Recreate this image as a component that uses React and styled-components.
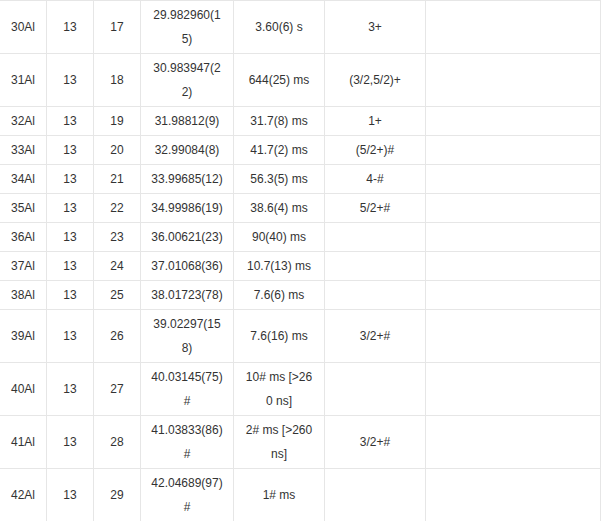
import React from "react";
import styled, { createGlobalStyle } from "styled-components";

const Global = createGlobalStyle`
  html, body { margin: 0; padding: 0; background: #fff; }
  body { font-family: "Liberation Sans", Arial, sans-serif; }
`;

const Table = styled.table`
  border-collapse: collapse;
  table-layout: fixed;
  width: 602px;
  margin-left: -1px;
  font-size: 12px;
  line-height: 24px;
  color: #333;
`;

const Cell = styled.td`
  border: 1px solid #e6e6e6;
  padding: 2px 10px;
  text-align: center;
  vertical-align: middle;
  word-break: break-all;
`;

const widths = [47, 47, 47, 93, 91, 101, 175];

const rows = [
  ["30Al", "13", "17", "29.982960(15)", "3.60(6) s", "3+"],
  ["31Al", "13", "18", "30.983947(22)", "644(25) ms", "(3/2,5/2)+"],
  ["32Al", "13", "19", "31.98812(9)", "31.7(8) ms", "1+"],
  ["33Al", "13", "20", "32.99084(8)", "41.7(2) ms", "(5/2+)#"],
  ["34Al", "13", "21", "33.99685(12)", "56.3(5) ms", "4-#"],
  ["35Al", "13", "22", "34.99986(19)", "38.6(4) ms", "5/2+#"],
  ["36Al", "13", "23", "36.00621(23)", "90(40) ms", ""],
  ["37Al", "13", "24", "37.01068(36)", "10.7(13) ms", ""],
  ["38Al", "13", "25", "38.01723(78)", "7.6(6) ms", ""],
  ["39Al", "13", "26", "39.02297(158)", "7.6(16) ms", "3/2+#"],
  ["40Al", "13", "27", "40.03145(75)#", "10# ms [>260 ns]", ""],
  ["41Al", "13", "28", "41.03833(86)#", "2# ms [>260 ns]", "3/2+#"],
  ["42Al", "13", "29", "42.04689(97)#", "1# ms", ""],
];

export default function App() {
  return (
    <>
      <Global />
      <Table>
        <colgroup>
          {widths.map((w, i) => (
            <col key={i} style={{ width: w }} />
          ))}
        </colgroup>
        <tbody>
          {rows.map((r) => (
            <tr key={r[0]}>
              {r.map((c, i) => (
                <Cell key={i}>{c}</Cell>
              ))}
              <Cell />
            </tr>
          ))}
        </tbody>
      </Table>
    </>
  );
}
